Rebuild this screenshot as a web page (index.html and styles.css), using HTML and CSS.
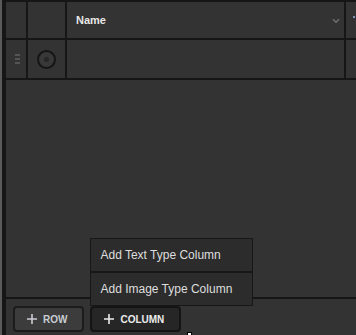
FILE: index.html
```html
<!DOCTYPE html>
<html lang="en">
<head>
  <meta charset="UTF-8">
  <title>Table editor</title>
  <link rel="stylesheet" href="styles.css">
</head>
<body>

<div class="app">
  <div class="sheet">
    <div class="grid">
      <div class="cell"></div>
      <div class="cell"></div>
      <div class="cell head">
        <span class="head-title">Name</span>
        <svg class="chevron" width="8" height="6" viewBox="0 0 8 6"><path d="M1 1.2 L4 4.2 L7 1.2" fill="none" stroke="#6f6f6f" stroke-width="1.6"/></svg>
      </div>
      <div class="cell head"><span class="head-mark"></span></div>

      <div class="cell center">
        <div class="handle"><i></i><i></i><i></i></div>
      </div>
      <div class="cell center">
        <div class="radio"><i></i></div>
      </div>
      <div class="cell"></div>
      <div class="cell"></div>
    </div>

    <div class="empty"></div>

    <div class="footer">
      <button class="btn">
        <svg width="10" height="10" viewBox="0 0 10 10"><path d="M5 0 V10 M0 5 H10" stroke="currentColor" stroke-width="1.6"/></svg>
        ROW
      </button>
      <div class="dropdown">
        <div class="menu">
          <div class="menu-item">Add Text Type Column</div>
          <div class="menu-item">Add Image Type Column</div>
        </div>
        <button class="btn active">
          <svg width="10" height="10" viewBox="0 0 10 10"><path d="M5 0 V10 M0 5 H10" stroke="currentColor" stroke-width="1.6"/></svg>
          COLUMN
        </button>
        <div class="cursor"></div>
      </div>
    </div>
  </div>
</div>

</body>
</html>
```

FILE: styles.css
```css
html, body { margin: 0; height: 100%; background: #333; overflow: hidden; }
body { font-family: "Liberation Sans", Arial, sans-serif; }
.app { height: 335px; padding-left: 2px; background: #5a5a5a; box-sizing: border-box; }
.sheet { height: 100%; display: flex; flex-direction: column; background: #333; border-left: 4px solid #161616; overflow: hidden; }
.grid { align-self: flex-start; display: grid; grid-template-columns: 20px 37px 277px 120px; grid-template-rows: 36px 38px; gap: 2px; padding: 2px 0; background: #161616; }
.cell { background: #333; display: flex; align-items: center; }
.center { justify-content: center; }
.head { justify-content: space-between; padding: 0 4px 0 9px; }
.head + .head { padding-left: 7px; justify-content: flex-start; }
.head-title { color: #e8e8e8; font-size: 11px; font-weight: bold; }
.head-mark { width: 2px; height: 2px; margin-top: -7px; background: #7d93b5; }
.chevron { margin-top: 2px; }
.handle { display: flex; flex-direction: column; gap: 2px; margin-left: 3px; }
.handle i { display: block; width: 5px; height: 2px; background: #555; }
.radio { width: 15px; height: 15px; border: 2px solid #151515; border-radius: 50%; background: #383838; display: flex; align-items: center; justify-content: center; }
.radio i { display: block; width: 5px; height: 5px; border-radius: 50%; background: #262626; }
.empty { flex: 1; }
.footer { flex: none; height: 38px; border-top: 2px solid #161616; display: flex; gap: 6px; padding: 7px 0 0 7px; box-sizing: border-box; }
.btn { height: 26px; display: flex; align-items: center; gap: 6px; padding: 0 15px 0 12px; background: #3c3c3c; border: 2px solid #1c1c1c; border-radius: 4px; color: #c9ccd2; font-family: inherit; font-size: 10px; font-weight: bold; }
.btn.active { background: #262626; border-color: #141414; color: #ececec; }
.dropdown { position: relative; }
.menu { position: absolute; left: 0; bottom: 100%; width: 163px; background: #2c2c2c; border: 1px solid #171717; box-sizing: border-box; }
.menu-item { height: 32px; display: flex; align-items: center; padding-left: 9px; color: #dedede; font-size: 12px; }
.menu-item + .menu-item { border-top: 2px solid #171717; }
.cursor { position: absolute; left: 97px; top: 26px; width: 3px; height: 4px; background: #fff; border: 1px solid #000; }
```
